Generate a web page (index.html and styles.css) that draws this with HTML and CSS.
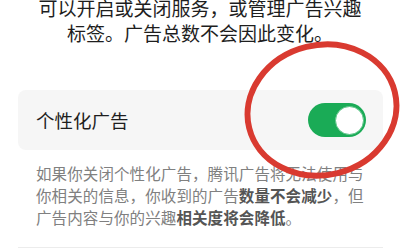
FILE: index.html
```html
<!DOCTYPE html>
<html lang="zh-CN">
<head>
  <meta charset="UTF-8">
  <meta name="viewport" content="width=device-width, initial-scale=1.0">
  <title>个性化广告</title>
  <link rel="stylesheet" href="styles.css">
</head>
<body>
  <div class="page">
    <p class="intro">可以开启或关闭服务，或管理广告兴趣<br>标签。广告总数不会因此变化。</p>

    <div class="card">
      <span class="label">个性化广告</span>
      <div class="switch on">
        <div class="knob"></div>
      </div>
    </div>

    <p class="desc">如果你关闭个性化广告，腾讯广告将无法使用与你相关的信息，你收到的广告<b>数量不会减少</b>，但广告内容与你的兴趣<b>相关度将会降低</b>。</p>

    <div class="divider"></div>

    <!-- hand drawn mark over the switch -->
    <svg class="mark" width="170" height="170" viewBox="0 0 170 170">
      <ellipse cx="92" cy="80" rx="75" ry="65" transform="rotate(-14 92 80)" fill="none" stroke="#d93a30" stroke-width="6"/>
    </svg>
  </div>
</body>
</html>
```

FILE: styles.css
```css
body {
  margin: 0;
  background: #fff;
  font-family: "Noto Sans CJK SC", "Noto Sans", sans-serif;
  overflow: hidden;
}

.page {
  position: relative;
  width: 400px;
  height: 249px;
  overflow: hidden;
}

.intro {
  margin: -5px 0 0;
  text-align: center;
  font-size: 19px;
  line-height: 25px;
  color: #1e1e1e;
}

.card {
  margin: 45px 17px 0 18px;
  height: 60px;
  padding: 0 17px 0 18px;
  background: #f6f6f6;
  border-radius: 8px;
  display: flex;
  align-items: center;
  justify-content: space-between;
}

.label {
  font-size: 18.5px;
  color: #1e1e1e;
}

.switch {
  width: 58px;
  height: 34px;
  border-radius: 17px;
  background: #e2e2e2;
  display: flex;
  align-items: center;
  padding: 0 2px;
  box-sizing: border-box;
}

.switch.on {
  background: #1aab56;
  justify-content: flex-end;
}

.knob {
  width: 29px;
  height: 29px;
  border-radius: 50%;
  background: #fff;
  border: 1px solid #5cc487;
  box-sizing: border-box;
}

.desc {
  margin: 12px 36px 0 36px;
  font-size: 15.5px;
  line-height: 22px;
  color: #808080;
  letter-spacing: 0.1px;
}

.desc b {
  color: #555;
  font-weight: 700;
}

.divider {
  margin: 19px 17px 0 18px;
  border-top: 1px solid #ececec;
}

.mark {
  position: absolute;
  left: 230px;
  top: 30px;
}
```
